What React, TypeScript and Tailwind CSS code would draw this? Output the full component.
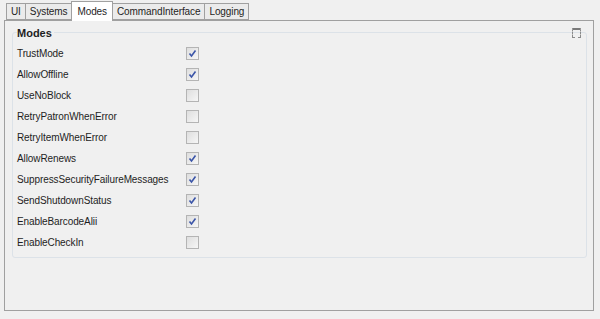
import React from "react";

const rows: [string, boolean][] = [
  ["TrustMode", true],
  ["AllowOffline", true],
  ["UseNoBlock", false],
  ["RetryPatronWhenError", false],
  ["RetryItemWhenError", false],
  ["AllowRenews", true],
  ["SuppressSecurityFailureMessages", true],
  ["SendShutdownStatus", true],
  ["EnableBarcodeAlii", true],
  ["EnableCheckIn", false],
];

function Check({ on }: { on: boolean }) {
  return (
    <div className="w-[13px] h-[13px] border border-[#b4b4b4] bg-gradient-to-br from-[#dedede] to-[#f6f6f6] flex items-center justify-center">
      {on && (
        <svg width="9" height="9" viewBox="0 0 9 9">
          <path d="M1.5 4.5 L3.5 7 L7.5 1.5" stroke="#3b55a8" strokeWidth="1.6" fill="none" />
        </svg>
      )}
    </div>
  );
}

const tabs = ["UI", "Systems", "Modes", "CommandInterface", "Logging"];

export default function App() {
  return (
    <div className="w-[600px] h-[319px] bg-[#f0f0f0] pt-[3px] pl-[4px] pr-[6px] text-[10px] tracking-[-0.1px] text-[#1e1e1e]" style={{ fontFamily: '"Liberation Sans", Arial, sans-serif' }}>
      <div className="flex h-[17px] items-end pl-[2px]">
        {tabs.map((t) =>
          t === "Modes" ? (
            <div key={t} className="relative z-10 h-[20px] -mb-px px-[5px] bg-white border border-b-0 border-[#a0a0a0] flex items-center -ml-px">
              {t}
            </div>
          ) : (
            <div key={t} className="h-[17px] px-[4px] bg-[#ebebeb] border border-[#a0a0a0] flex items-center -ml-px first:ml-0">
              {t}
            </div>
          )
        )}
      </div>
      <div className="h-[291px] border border-[#a0a0a0] bg-[#f0f0f0] pt-[11px] pl-[7px] pr-[6px]">
        <div className="relative h-[226px] border border-[#dce2e8] rounded-[3px] pl-[4px]">
          <div className="relative -mt-[6px] font-bold leading-[13px] text-[11px] tracking-normal bg-[#f0f0f0] w-fit pr-[2px]">Modes</div>
          <div className="absolute right-[5px] top-[-5px] w-[9px] h-[10px] border border-dashed border-[#8a8a8a] border-t-2 border-t-[#7a7a7a]" />
          <div className="mt-[3px]">
            {rows.map(([l, on]) => (
              <div key={l} className="flex items-center h-[21px]">
                <div className="w-[169px]">{l}</div>
                <Check on={on} />
              </div>
            ))}
          </div>
        </div>
      </div>
    </div>
  );
}
